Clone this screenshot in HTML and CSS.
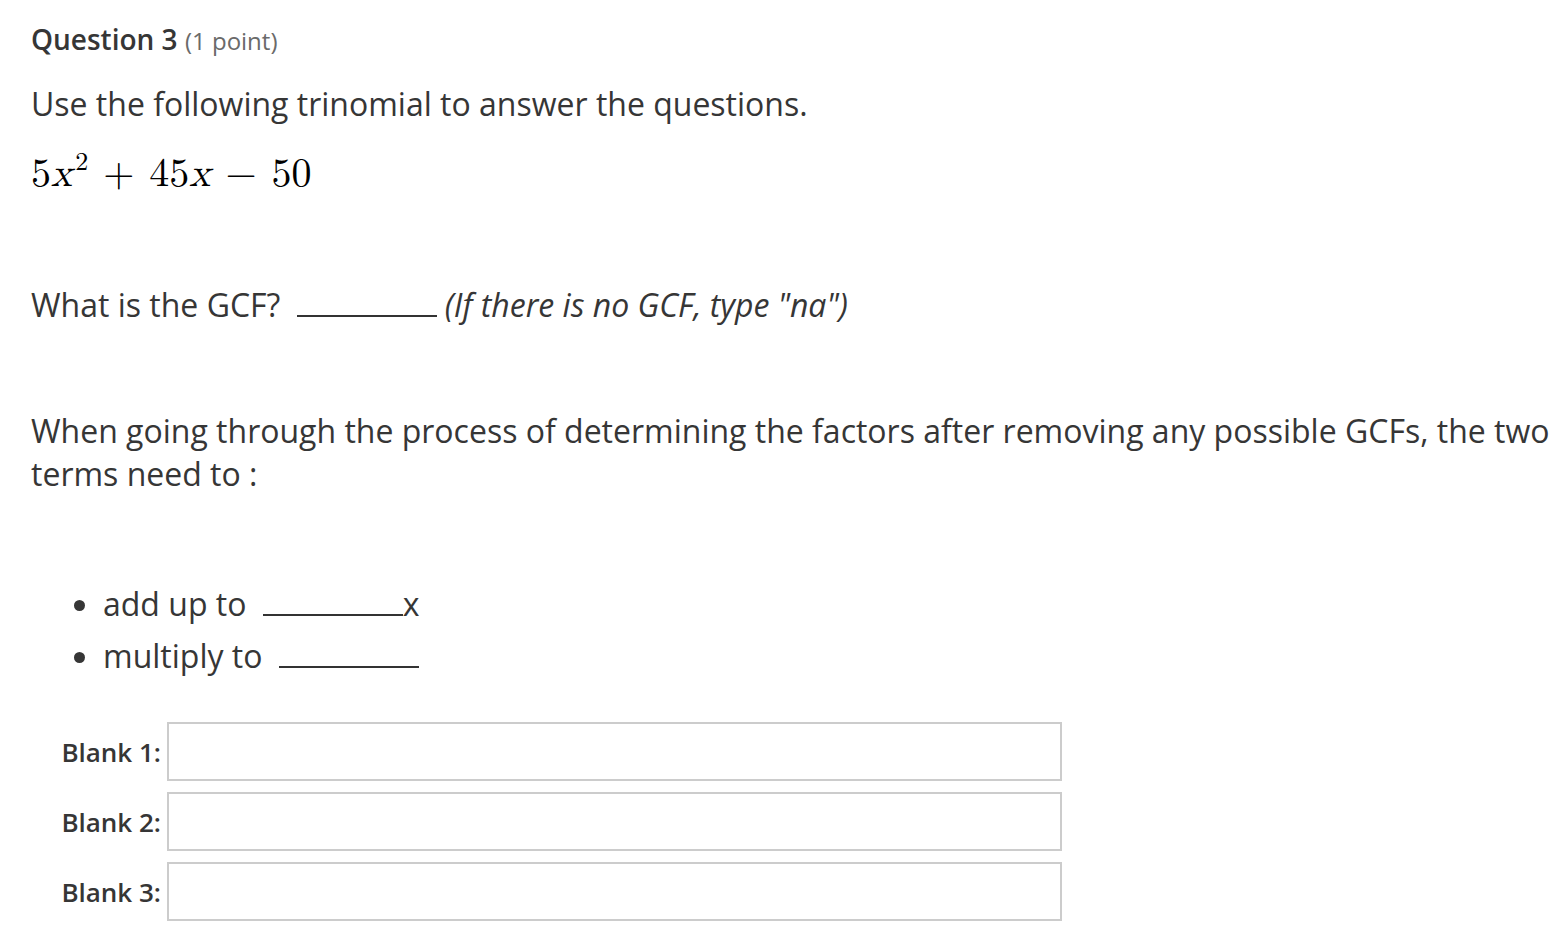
FILE: index.html
```html
<!DOCTYPE html>
<html>
<head>
<meta charset="utf-8">
<link rel="stylesheet" href="styles.css">
</head>
<body>
<div class="page">
  <h2 class="qhead">Question 3 <span class="pts">(1 point)</span></h2>
  <p class="txt intro">Use the following trinomial to answer the questions.</p>
  <p class="math"><span>5<i>x</i><sup>2</sup></span><span class="op">+</span><span>45<i>x</i></span><span class="op">−</span><span>50</span></p>
  <p class="txt gcf">What is the GCF? <span class="blank b1"></span><em>(If there is no GCF, type "na")</em></p>
  <p class="txt when">When going through the process of determining the factors after removing any possible GCFs, the two terms need to :</p>
  <ul class="txt list">
    <li>add up to <span class="blank b2"></span>x</li>
    <li>multiply to <span class="blank b3"></span></li>
  </ul>
  <div class="answers">
    <label class="row"><span class="lbl">Blank 1:</span><span class="box"></span></label>
    <label class="row"><span class="lbl">Blank 2:</span><span class="box"></span></label>
    <label class="row"><span class="lbl">Blank 3:</span><span class="box"></span></label>
  </div>
</div>
</body>
</html>
```
FILE: styles.css
```css
html, body { margin: 0; padding: 0; background: #fff; }
body { font-family: "Open Sans", "Noto Sans", sans-serif; color: #363636; }
.page { padding: 21px 0 0 31px; width: 1530px; }
.qhead { margin: 0; font-size: 28px; font-weight: 600; color: #363636; line-height: 36px; }
.pts { font-size: 24px; font-weight: 400; color: #6a6a6a; }
.txt { font-size: 32px; line-height: 43px; margin: 0; }
.intro { margin-top: 23px; }
.math { margin: 24px 0 0; font-family: "Latin Modern Math", "Liberation Serif", "DejaVu Serif", serif; font-size: 40px; line-height: 50px; color: #000; }
.math i { font-style: italic; }
.math sup { font-size: 26px; vertical-align: 0; position: relative; top: -16px; margin-left: 3px; }
.math .op { margin: 0 15px; }
.gcf { margin-top: 80px; }
.gcf em { font-style: italic; margin-left: 8px; }
.blank { display: inline-block; width: 140px; border-bottom: 2px solid #333; vertical-align: baseline; height: 1px; margin-left: 8px; }
.when { margin-top: 83px; }
.list { margin: 83px 0 0; padding-left: 72px; }
.list li { line-height: 52px; }
.answers { margin-top: 40px; padding-left: 30px; display: flex; flex-direction: column; gap: 11px; }
.row { display: flex; align-items: center; gap: 6px; }
.lbl { width: 100px; text-align: right; font-size: 26px; font-weight: 600; color: #363636; }
.box { width: 891px; height: 55px; border: 2px solid #ccc; background: #fff; }
```
